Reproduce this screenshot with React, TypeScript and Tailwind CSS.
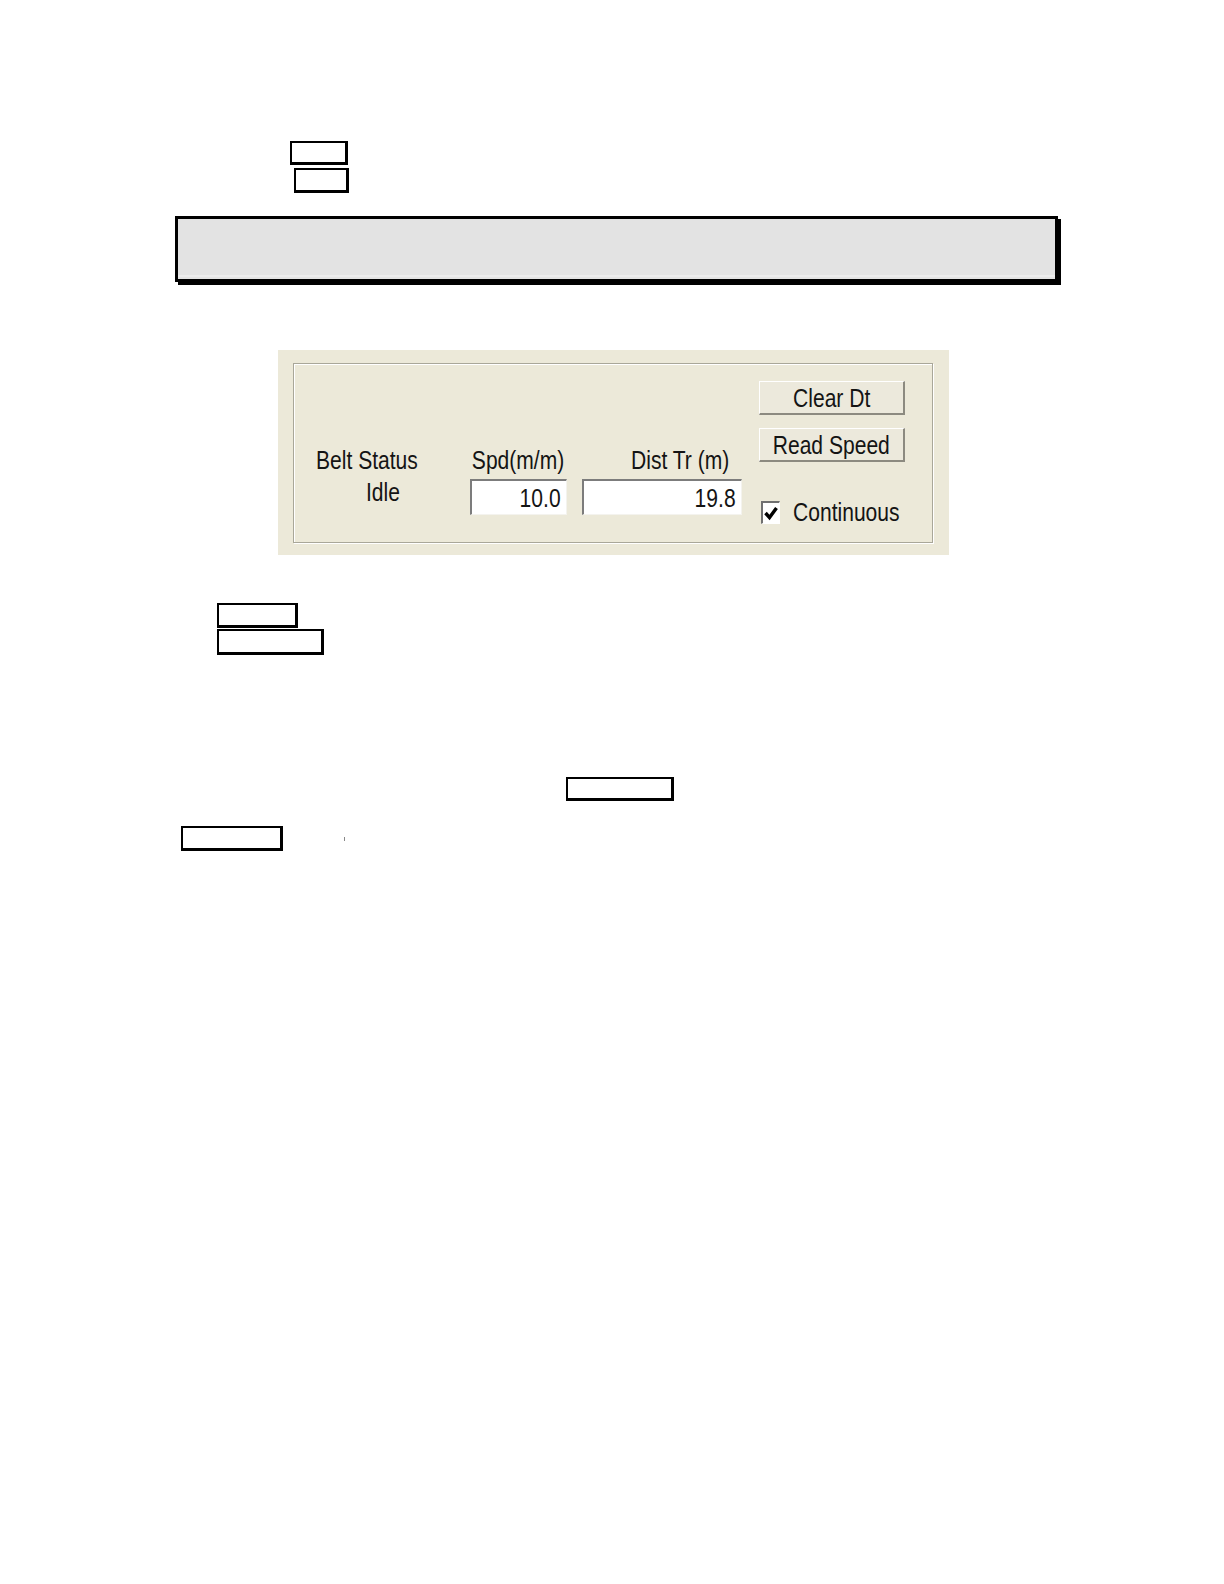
const ui = {
  fontFamily: '"Liberation Sans", Arial, sans-serif',
};

function T({ children, className = "" }: { children: React.ReactNode; className?: string }) {
  return (
    <span
      className={"inline-block scale-x-[0.81] whitespace-nowrap text-[26px] leading-none text-[#141414] " + className}
      style={ui}
    >
      {children}
    </span>
  );
}

function OutlineBox({ className }: { className: string }) {
  return (
    <div
      className={
        "border-t-2 border-l-2 border-r-[3px] border-b-[3px] border-black bg-white " +
        className
      }
    />
  );
}

function Field({ value, width }: { value: string; width: string }) {
  return (
    <div
      className={
        "flex h-[36px] items-center justify-end border-t-2 border-l-2 border-t-[#7c7c7c] border-l-[#7c7c7c] border-r border-b border-r-[#f4f3ee] border-b-[#f4f3ee] bg-white pr-[5px] " +
        width
      }
    >
      <T className="origin-right">{value}</T>
    </div>
  );
}

function WinButton({ label }: { label: string }) {
  return (
    <div className="flex h-[34px] w-[146px] items-center justify-center border-t border-l border-white border-r-2 border-b-2 border-r-[#8c8a80] border-b-[#8c8a80] bg-[#ece9dc]">
      <T className="origin-center">{label}</T>
    </div>
  );
}

function BeltPanel() {
  return (
    <div className="ml-[278px] h-[205px] w-[671px] bg-[#ece9d9] pt-[13px] pl-[15px]">
      <div className="flex h-[180px] w-[640px] border border-[#a9a799] shadow-[inset_1px_1px_0_#fff,1px_1px_0_#fff]">
        <div className="ml-[22px] mt-[83px] flex w-[154px] flex-col items-start">
          <T className="origin-left">Belt Status</T>
          <T className="ml-[50px] mt-[6px] origin-left">Idle</T>
        </div>
        <div className="mt-[83px] flex w-[97px] flex-col items-center">
          <T className="origin-center">Spd(m/m)</T>
          <div className="mt-[6px]">
            <Field value="10.0" width="w-[97px]" />
          </div>
        </div>
        <div className="ml-[15px] mt-[83px] flex w-[160px] flex-col items-start">
          <T className="ml-[49px] origin-left">Dist Tr (m)</T>
          <div className="mt-[6px]">
            <Field value="19.8" width="w-[160px]" />
          </div>
        </div>
        <div className="ml-[17px] mt-[17px] flex w-[146px] flex-col">
          <WinButton label="Clear Dt" />
          <div className="mt-[13px]">
            <WinButton label="Read Speed" />
          </div>
          <div className="mt-[37px] flex items-center">
            <div className="ml-[2px] flex h-[23px] w-[22px] items-center justify-center border-t-2 border-l-2 border-t-[#707070] border-l-[#707070] border-r border-b border-r-white border-b-white bg-white">
              <svg viewBox="0 0 16 16" className="h-[16px] w-[16px]">
                <path d="M2.5 8 L6.5 12.5 L13.5 3" fill="none" stroke="#000" strokeWidth="3.4" />
              </svg>
            </div>
            <T className="ml-[13px] origin-left">Continuous</T>
          </div>
        </div>
      </div>
    </div>
  );
}

export default function App() {
  return (
    <div className="min-h-screen w-full bg-white pt-[141px]">
      <OutlineBox className="ml-[290px] h-[24px] w-[58px]" />
      <OutlineBox className="ml-[294px] mt-[3px] h-[25px] w-[55px]" />

      <div className="ml-[175px] mt-[23px] h-[66px] w-[883px] border-[3px] border-black bg-[#e3e3e3] shadow-[3px_3px_0_#000]">
        <div className="mt-[56px] h-[2px] bg-[#ececec]" />
      </div>

      <div className="mt-[68px]">
        <BeltPanel />
      </div>

      <OutlineBox className="ml-[217px] mt-[48px] h-[25px] w-[81px]" />
      <OutlineBox className="ml-[217px] mt-[1px] h-[26px] w-[107px]" />

      <div className="ml-[566px] mt-[122px] flex">
        <OutlineBox className="h-[24px] w-[108px]" />
      </div>

      <div className="ml-[181px] mt-[25px] flex items-center">
        <OutlineBox className="h-[25px] w-[102px]" />
        <span className="ml-[61px] h-[4px] w-px bg-[#888]" />
      </div>
    </div>
  );
}
